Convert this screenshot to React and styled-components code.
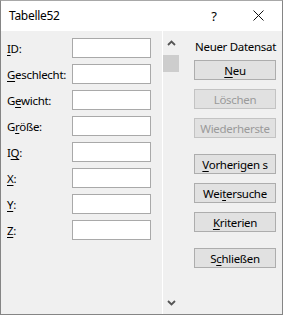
import React from 'react';
import styled, { createGlobalStyle } from 'styled-components';

const GlobalStyle = createGlobalStyle`
    html, body {
        margin: 0;
        padding: 0;
        background: #ffffff;
    }
    body {
        font-family: "Noto Sans", "Liberation Sans", sans-serif;
        font-size: 11.5px;
        letter-spacing: -0.3px;
        color: #000;
    }
`

const fields = [
    { before: '', key: 'I', after: 'D:' },
    { before: '', key: 'G', after: 'eschlecht:' },
    { before: 'G', key: 'e', after: 'wicht:' },
    { before: 'G', key: 'r', after: 'öße:' },
    { before: 'I', key: 'Q', after: ':' },
    { before: '', key: 'X', after: ':' },
    { before: '', key: 'Y', after: ':' },
    { before: '', key: 'Z', after: ':' },
];

const buttonGroups = [
    [
        { before: '', key: 'N', after: 'eu' },
        { before: 'Löschen', disabled: true },
        { before: 'Wiederherste', disabled: true },
    ],
    [
        { before: '', key: 'V', after: 'orherigen s' },
        { before: 'Wei', key: 't', after: 'ersuche' },
        { before: '', key: 'K', after: 'riterien' },
    ],
    [
        { before: 'S', key: 'c', after: 'hließen' },
    ],
];

function AccessText({ item }) {
    return (
        <>
            {item.before}
            {item.key && <u>{item.key}</u>}
            {item.after}
        </>
    );
}

function Chevron({ down }) {
    return (
        <svg width="9" height="6" viewBox="0 0 9 6">
            <path
                d={down ? 'M1 1 L4.5 4.5 L8 1' : 'M1 5 L4.5 1.5 L8 5'}
                fill="none"
                stroke="#555"
                strokeWidth="1.8"
            />
        </svg>
    );
}

function App() {
    return (
        <>
            <GlobalStyle />
            <Window>
                <TitleBar>
                    <Title>Tabelle52</Title>
                    <HelpButton>?</HelpButton>
                    <CloseButton>
                        <svg width="11" height="11" viewBox="0 0 11 11">
                            <path d="M0.5 0.5 L10.5 10.5 M10.5 0.5 L0.5 10.5" stroke="#111" strokeWidth="1" />
                        </svg>
                    </CloseButton>
                </TitleBar>
                <Body>
                    <Form>
                        {fields.map((f, i) => (
                            <FieldRow key={i}>
                                <Label><AccessText item={f} /></Label>
                                <TextBox />
                            </FieldRow>
                        ))}
                    </Form>
                    <ScrollBar>
                        <ArrowCell><Chevron /></ArrowCell>
                        <Thumb />
                        <ScrollSpace />
                        <ArrowCell><Chevron down /></ArrowCell>
                    </ScrollBar>
                    <Side>
                        <Caption>Neuer Datensat</Caption>
                        {buttonGroups.map((group, g) => (
                            <ButtonGroup key={g}>
                                {group.map((b, i) => (
                                    <Button key={i} disabled={b.disabled}>
                                        <AccessText item={b} />
                                    </Button>
                                ))}
                            </ButtonGroup>
                        ))}
                    </Side>
                </Body>
            </Window>
        </>
    );
}

export default App;

const Window = styled.div`
    width: 283px;
    height: 315px;
    box-sizing: border-box;
    border: 1px solid #858585;
    border-top-color: #a8a8a8;
    display: flex;
    flex-direction: column;
    background: #f0f0f0;
`
const TitleBar = styled.div`
    height: 30px;
    background: #ffffff;
    display: flex;
    align-items: center;
    padding-left: 8px;
`
const Title = styled.div`
    flex: 1;
    font-size: 12px;
    margin-top: -1px;
`
const HelpButton = styled.div`
    width: 20px;
    text-align: center;
    font-size: 13px;
    margin-right: 29px;
    margin-top: -1px;
`
const CloseButton = styled.div`
    width: 11px;
    height: 11px;
    display: flex;
    margin-right: 18px;
    margin-top: -2px;
`
const Body = styled.div`
    flex: 1;
    display: flex;
    min-height: 0;
`
const Form = styled.div`
    width: 160px;
    box-sizing: border-box;
    padding: 7px 0 0 6px;
    display: flex;
    flex-direction: column;
    gap: 6px;
`
const FieldRow = styled.div`
    display: flex;
    align-items: center;
    height: 20px;
`
const Label = styled.div`
    width: 65px;
    white-space: nowrap;
    u {
        text-underline-offset: 2px;
    }
`
const TextBox = styled.div`
    width: 79px;
    height: 20px;
    box-sizing: border-box;
    border: 1px solid #a9a9a9;
    background: #ffffff;
`
const ScrollBar = styled.div`
    width: 16px;
    border-left: 1px solid #ffffff;
    margin-left: 1px;
    display: flex;
    flex-direction: column;
`
const ArrowCell = styled.div`
    height: 22px;
    display: flex;
    align-items: center;
    justify-content: center;
    padding-top: 1px;
    svg {
        display: block;
    }
`
const Thumb = styled.div`
    height: 17px;
    margin: 1px 0 0 0;
    background: #cdcdcd;
`
const ScrollSpace = styled.div`
    flex: 1;
`
const Side = styled.div`
    flex: 1;
    padding: 6px 0 0 15px;
    display: flex;
    flex-direction: column;
`
const Caption = styled.div`
    height: 20px;
    line-height: 20px;
    white-space: nowrap;
    margin-left: 1px;
    margin-bottom: 3px;
`
const ButtonGroup = styled.div`
    display: flex;
    flex-direction: column;
    gap: 9px;
    margin-bottom: 16px;
`
const Button = styled.button`
    width: 82px;
    height: 20px;
    box-sizing: border-box;
    padding: 0;
    font-family: inherit;
    font-size: 11.5px;
    letter-spacing: -0.3px;
    white-space: nowrap;
    overflow: hidden;
    background: #e1e1e1;
    border: 1px solid ${p => (p.disabled ? '#c3c3c3' : '#adadad')};
    color: ${p => (p.disabled ? '#9a9a9a' : '#000')};
    u {
        text-underline-offset: 2px;
    }
`
